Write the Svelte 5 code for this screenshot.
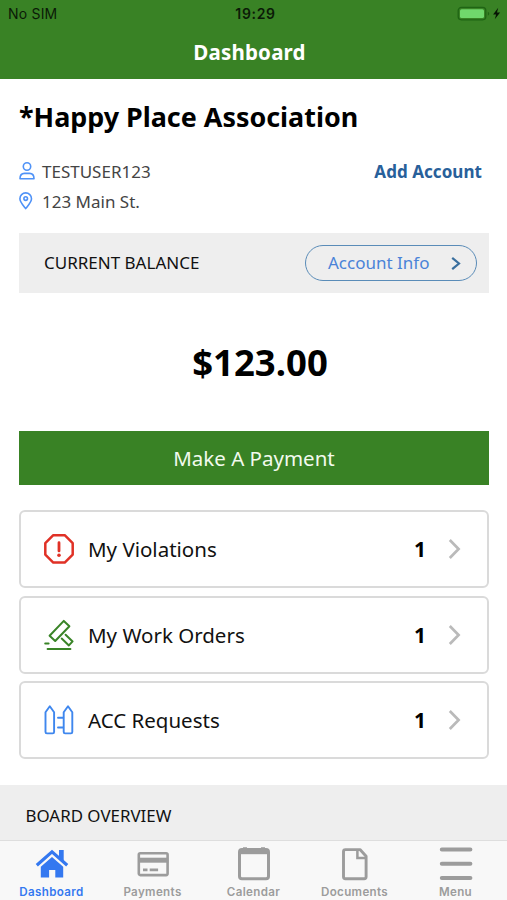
<script>
  const cards = [
    { icon: 'alert', label: 'My Violations', count: 1 },
    { icon: 'gavel', label: 'My Work Orders', count: 1 },
    { icon: 'fence', label: 'ACC Requests', count: 1 }
  ];
  const tabs = ['Dashboard', 'Payments', 'Calendar', 'Documents', 'Menu'];
  let active = $state('Dashboard');
</script>

<div class="screen">
  <header>
    <div class="status">
      <span class="carrier">No SIM</span>
      <span class="time">19:29</span>
      <svg class="battery" width="46" height="16" viewBox="0 0 46 16">
        <rect x="1.2" y="1.4" width="27.6" height="12.4" rx="3.2" fill="none" stroke="#1f6414" stroke-width="1.3" />
        <rect x="3" y="3.2" width="24" height="8.8" rx="1.6" fill="#70d86c" />
        <path d="M30.8 5.8v3.8q1.4-.6 1.4-1.9t-1.4-1.9z" fill="#1f6414" />
        <path d="M41.2 1.8l-5.1 6.600h3l-1.300 4.900 5.300-6.700h-3.100z" fill="#071404" />
      </svg>
    </div>
    <div class="title">Dashboard</div>
  </header>

  <main>
    <h1>*Happy Place Association</h1>
    <section class="account">
      <div class="details">
        <div class="line">
          <svg width="16" height="18" viewBox="0 0 16 18" fill="none" stroke="#4f92f7" stroke-width="1.6">
            <circle cx="8" cy="4.5" r="3.7" />
            <path d="M1 16.7c0-3.5 1.7-5.3 4.4-5.3h5.2c2.7 0 4.4 1.8 4.4 5.3z" stroke-linejoin="round" />
          </svg>
          <span class="user">TESTUSER123</span>
        </div>
        <div class="line">
          <svg width="16" height="18" viewBox="0 0 16 18" fill="none" stroke="#4f92f7" stroke-width="1.6">
            <path d="M6.7 16.6C3.6 12.7.9 9.8.9 6.7a5.8 5.8 0 0 1 11.6 0c0 3.1-2.7 6-5.8 9.9z" stroke-linejoin="round" />
            <circle cx="6.7" cy="6.6" r="1.8" />
          </svg>
          <span class="street">123 Main St.</span>
        </div>
      </div>
      <a class="add" href="#add">Add Account</a>
    </section>

    <section class="balance">
      <span>CURRENT BALANCE</span>
      <button class="info">
        <span>Account Info</span>
        <svg width="10" height="14" viewBox="0 0 10 14" fill="none" stroke="#3a6f9e" stroke-width="2.2">
          <path d="M1.2 1.800L8 7.500l-6.800 5.700" />
        </svg>
      </button>
    </section>

    <div class="amount">$123.00</div>
    <button class="pay"><span>Make A Payment</span></button>

    <div class="cards">
      {#each cards as card}
        <div class="card">
          <svg class="icon" width="32" height="32" viewBox="0 0 32 32" fill="none" stroke-width="2.5" stroke-linejoin="round" stroke-linecap="round">
            {#if card.icon === 'alert'}
              <path d="M10.3 2.2h11.4l8 8v11.4l-8 8H10.3l-8-8V10.2z" stroke="#e03126" />
              <path d="M16 9.7v8.2" stroke="#e03126" stroke-width="2.8" />
              <circle cx="16" cy="22.3" r="1.8" fill="#e03126" stroke="none" />
            {:else if card.icon === 'gavel'}
              <g stroke="#398427" stroke-width="2">
                <path d="M20.800 1.900l5.600 5.300L12.200 22 6.600 16.700z" />
                <path d="M22.600 15.800l7 6.600-3.700 4-7.200-6.800" />
                <path d="M2.200 24.500h3.400M4.600 29.900h22.800" />
              </g>
            {:else}
              <g stroke="#3f87ee" stroke-width="1.900">
                <path d="M6.800 2.200l4.300 6v19.800q0 1.400-1.400 1.400H3.900q-1.400 0-1.400-1.400V8.200z" />
                <path d="M25 2.200l4.300 6v19.800q0 1.400-1.400 1.400h-5.800q-1.400 0-1.400-1.400V8.200z" />
                <path d="M15 13.700h5.200M15 23.500h5.200" />
              </g>
            {/if}
          </svg>
          <span class="label">{card.label}</span>
          <b>{card.count}</b>
          <svg class="chevron" width="14" height="22" viewBox="0 0 14 22" fill="none" stroke="#bababa" stroke-width="2.7">
            <path d="M1.800 2L10.600 11 1.800 20" />
          </svg>
        </div>
      {/each}
    </div>
  </main>

  <section class="board"><span>BOARD OVERVIEW</span></section>

  <nav>
    {#each tabs as tab}
      <button class="tab {tab.toLowerCase()}" class:active={tab === active} onclick={() => (active = tab)}>
        <svg width="36" height="36" viewBox="0 0 36 36" fill="none" stroke="currentColor">
          {#if tab === 'Dashboard'}
            <path d="M2.800 19.200L18 5.800l15.200 13.400" stroke-width="3.200" />
            <path d="M25 4h4.700v11L25 10.900z" fill="currentColor" stroke="none" />
            <path d="M18 10.900l11.200 9.800v10.800h-7.900v-7.500h-6.200v7.500H6.800V20.700z" fill="currentColor" stroke="none" />
          {:else if tab === 'Payments'}
            <rect x="3.800" y="7.200" width="28.800" height="21.900" rx="1.500" stroke-width="2.600" />
            <path d="M3.200 14.200h30" stroke-width="5" />
            <path d="M8 23.800h4.500M14.700 23.800h8.400" stroke-width="2.800" />
          {:else if tab === 'Calendar'}
            <rect x="3.500" y="3.400" width="29" height="29.300" rx="2.500" stroke-width="3" />
            <path d="M3 5.700h30" stroke-width="5" />
            <path d="M9 1.300v3M27 1.300v3" stroke-width="4" />
          {:else if tab === 'Documents'}
            <path d="M19.300 3.600H8.500q-2 0-2 2v25.100q0 2 2 2h18.600q2 0 2-2V10.200L23 3.600z" stroke-width="2.900" stroke-linejoin="round" />
            <path d="M20.400 3.600v8.300h8.700" stroke-width="2.500" />
          {:else}
            <path d="M3.800 3.500h28.600M3.800 17.800h28.600M3.800 32h28.600" stroke-width="4" stroke-linecap="round" />
          {/if}
        </svg>
        <span>{tab}</span>
      </button>
    {/each}
  </nav>
</div>

<style>
  :global(body) { margin: 0; background: #fff; }
  * { box-sizing: border-box; }
  button { font: inherit; border: 0; background: none; margin: 0; padding: 0; }
  svg { display: block; flex: none; }
  .screen {
    width: 507px; height: 900px; overflow: hidden;
    display: flex; flex-direction: column;
    background: #fff; color: #111;
    font-family: "Noto Sans", sans-serif; white-space: nowrap;
  }
  header { height: 79px; flex: none; background: #398225; }
  .status {
    height: 27px; padding: 0 4px 0 8px;
    display: grid; grid-template-columns: 1fr auto 1fr; align-items: center;
    font-family: Inter, sans-serif; font-size: 14px; color: #0b1a07;
  }
  .carrier { letter-spacing: 0.2px; }
  .time { font-weight: 600; letter-spacing: 0.65px; }
  .battery { justify-self: end; }
  .title {
    height: 50px; line-height: 50px; padding-right: 8px; text-align: center;
    font-size: 20.5px; font-weight: 700; letter-spacing: 0.2px; color: #fff;
  }
  main { flex: none; padding: 0 18px 0 19px; height: 706px; }
  h1 { margin: 0; padding-top: 18px; font-size: 26.9px; line-height: 40px; font-weight: 700; color: #000; }
  .account { display: flex; justify-content: space-between; margin-top: 19px; padding-right: 7px; height: 77px; }
  .line { display: flex; align-items: center; height: 30px; gap: 7px; font-size: 17px; color: #444; }
  .add { font-size: 17px; line-height: 31px; font-weight: 700; letter-spacing: 0.05px; color: #28609a; text-decoration: none; }
  .balance {
    height: 60px; background: #eee; padding: 0 12px 0 25px;
    display: flex; align-items: center; justify-content: space-between;
    font-size: 17px; line-height: 22px;
  }
  .info {
    width: 172px; height: 36px; border: 1.9px solid #5a8cb8; border-radius: 18px;
    display: flex; align-items: center; justify-content: space-between;
    padding: 0 15px 0 22px; color: #4a83d8; font-size: 17px;
  }
  .amount { height: 138px; line-height: 138px; padding-left: 12px; text-align: center; font-size: 36.5px; font-weight: 700; color: #000; }
  .pay { display: block; width: 100%; height: 54px; background: #398225; color: #f2faee; font-size: 20.5px; line-height: 54px; }
  .cards { display: flex; flex-direction: column; gap: 7.5px; margin-top: 25px; }
  .card {
    height: 78px; border: 2px solid #dadada; border-radius: 6px;
    display: flex; align-items: center; padding: 0 25px 0 22px; font-size: 20.5px; line-height: 28px;
  }
  .label { flex: 1; padding-left: 13px; }
  .card b { font-size: 21px; color: #000; margin-right: 22px; }
  .board { height: 55px; flex: none; background: #eee; padding-left: 25.5px; font-size: 16.9px; line-height: 61px; }
  nav {
    height: 60px; flex: none; border-top: 1px solid #dedede; background: #f8f8f8;
    display: grid; grid-template-columns: repeat(5, 101px); justify-content: center;
  }
  .tab {
    display: flex; flex-direction: column; align-items: center; padding-top: 5px;
    color: #9c9c9c; font-family: Inter, sans-serif; font-size: 11.6px; font-weight: 600; line-height: 20px;
    letter-spacing: 0.35px;
  }
  .tab.active { color: #3478f0; }
</style>
